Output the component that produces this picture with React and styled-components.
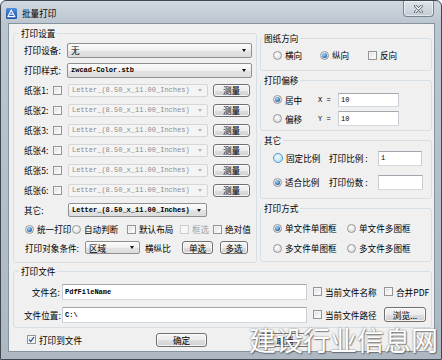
import React from 'react';
import styled, { createGlobalStyle } from 'styled-components';

const CJK = '"Noto Sans CJK SC", "Liberation Sans", sans-serif';
const MONO = '"Liberation Mono", "Noto Sans CJK SC", monospace';

const GlobalStyle = createGlobalStyle`
  html, body { margin: 0; padding: 0; }
  body {
    width: 442px;
    height: 360px;
    overflow: hidden;
    background: #fff;
    font-family: ${CJK};
    color: #000;
  }
  * { box-sizing: border-box; }
`;

const Window = styled.div`
  position: relative;
  width: 442px;
  height: 360px;
  display: flex;
  flex-direction: column;
  border: 1px solid #3f474f;
  border-radius: 6px 6px 0 0;
  background: linear-gradient(180deg, #d0d8e0 0px, #bcc6d0 22px, #adb8c3 100%);
  overflow: hidden;
`;

const TitleBar = styled.div`
  height: 22px;
  flex: none;
  display: flex;
  align-items: center;
  padding: 2px 7px 0 5px;
`;

const Title = styled.span`
  margin-left: 5px;
  font-size: 8.6px;
  line-height: 12px;
`;

const CloseButton = styled.div`
  align-self: flex-start;
  margin: -2px 0 0 auto;
  width: 31px;
  height: 16px;
  display: flex;
  align-items: center;
  justify-content: center;
  border: 1px solid #77838f;
  border-top: none;
  border-radius: 0 0 4px 4px;
  background: linear-gradient(#dfe5eb, #c3ccd5);
  box-shadow: inset 0 0 0 1px rgba(255, 255, 255, 0.55);
`;

const Client = styled.div`
  flex: 1;
  margin: 0 6px 7px 7px;
  display: flex;
  flex-direction: column;
  padding: 3px 2px 0 4px;
  background: #f0f0f0;
  border: 1px solid #8593a0;
`;

const TopSection = styled.div`
  display: flex;
  gap: 3px;
  align-items: flex-start;
`;

const RightColumn = styled.div`
  width: 172px;
  margin-top: 5px;
  display: flex;
  flex-direction: column;
  gap: 3px;
`;

const Group = styled.fieldset`
  margin: ${p => p.$mt || 0}px 0 0 0;
  min-width: 0;
  width: ${p => (p.$w ? `${p.$w}px` : 'auto')};
  border: 1px solid #d5dfe5;
  border-radius: 3px;
  padding: ${p => p.$pad};
`;

const Legend = styled.legend`
  padding: 0 2px;
  margin-left: ${p => p.$indent}px;
  font-size: 8.6px;
  line-height: 12px;
  height: 12px;
`;

const Row = styled.div`
  display: flex;
  align-items: center;
  height: ${p => p.$h}px;
`;

const Label = styled.span`
  flex: none;
  width: ${p => (p.$w ? `${p.$w}px` : 'auto')};
  margin-left: ${p => p.$ml || 0}px;
  text-align: ${p => (p.$right ? 'right' : 'left')};
  font-size: 8.6px;
  line-height: 12px;
  white-space: nowrap;
  color: ${p => (p.$disabled ? '#a3a3a3' : '#000')};
`;

const AxisLabel = styled.span`
  flex: none;
  width: 20px;
  font-family: ${MONO};
  font-size: 7px;
  white-space: nowrap;
`;

const Select = styled.div`
  flex: none;
  display: flex;
  align-items: center;
  width: ${p => p.$w}px;
  height: ${p => p.$h || 14}px;
  margin-left: ${p => p.$ml || 0}px;
  padding: 0 5px 0 3px;
  border: 1px solid ${p => (p.$disabled ? '#d6d6d6' : '#8e8f8f')};
  border-radius: 2px;
  background: ${p =>
    p.$disabled
      ? '#f4f4f4'
      : 'linear-gradient(#fcfcfc, #f0f0f0 50%, #e4e4e4 51%, #dcdcdc)'};
`;

const SelectText = styled.span`
  flex: 1;
  overflow: hidden;
  white-space: nowrap;
  font-family: ${p => (p.$cjk ? CJK : MONO)};
  font-size: ${p => (p.$cjk ? '8.6px' : '7px')};
  font-weight: ${p => (p.$bold ? 700 : 400)};
  color: ${p => (p.$disabled ? '#8c8c8c' : '#000')};
`;

const Arrow = styled.span`
  flex: none;
  width: 0;
  height: 0;
  border-left: 2.5px solid transparent;
  border-right: 2.5px solid transparent;
  border-top: 3px solid ${p => (p.$disabled ? '#b5b5b5' : '#111')};
`;

const Button = styled.div`
  flex: none;
  width: ${p => p.$w}px;
  height: ${p => p.$h || 13}px;
  margin-left: ${p => p.$ml || 0}px;
  display: flex;
  align-items: center;
  justify-content: center;
  border: 1px solid #707070;
  border-radius: 3px;
  background: linear-gradient(#f4f4f4, #ececec 50%, #dedede 51%, #d0d0d0);
  box-shadow: inset 0 0 0 1px rgba(255, 255, 255, 0.75);
  font-size: 8.6px;
  line-height: 12px;
  white-space: nowrap;
`;

const Input = styled.div`
  flex: none;
  width: ${p => p.$w}px;
  height: ${p => p.$h || 15}px;
  margin-left: ${p => p.$ml || 0}px;
  display: flex;
  align-items: center;
  padding: 0 2px;
  border: 1px solid;
  border-color: #a3a7af #c9ced6 #d3d8df #c9ced6;
  background: #fff;
  font-family: ${MONO};
  font-size: 7px;
  font-weight: ${p => (p.$bold ? 700 : 400)};
  white-space: nowrap;
`;

const Option = styled.div`
  flex: none;
  display: flex;
  align-items: center;
  gap: 3px;
  width: ${p => (p.$w ? `${p.$w}px` : 'auto')};
  margin-left: ${p => p.$ml || 0}px;
`;

const Check = styled.span`
  flex: none;
  width: 9px;
  height: 9px;
  display: flex;
  align-items: center;
  justify-content: center;
  border: 1px solid ${p => (p.$disabled ? '#cdcdcd' : '#959595')};
  background: ${p =>
    p.$disabled ? '#f6f6f6' : 'linear-gradient(135deg, #d6d8db, #f9f9f9 70%)'};
  box-shadow: ${p => (p.$disabled ? 'none' : 'inset 0 0 0 1px #f4f4f4')};
`;

const Radio = styled.span`
  flex: none;
  width: ${p => (p.$hover ? 10 : 9)}px;
  height: ${p => (p.$hover ? 10 : 9)}px;
  border-radius: 50%;
  display: flex;
  align-items: center;
  justify-content: center;
  border: 1px solid ${p => (p.$hover ? '#4d97cf' : '#979797')};
  background: ${p =>
    p.$hover
      ? 'radial-gradient(circle at 40% 35%, #f4fbff, #a9d6f3)'
      : 'radial-gradient(circle at 40% 35%, #ffffff, #d2d2d2)'};

  &::after {
    content: '';
    display: ${p => (p.$checked ? 'block' : 'none')};
    width: 5px;
    height: 5px;
    border-radius: 50%;
    background: radial-gradient(circle at 40% 35%, #a6dcff, #1d5ea8 75%);
  }
`;

const ButtonRow = styled.div`
  flex: 1;
  display: flex;
  align-items: center;
  padding-left: 14px;
`;

const Watermark = styled.div`
  position: absolute;
  left: 248px;
  top: 322px;
  font-family: ${CJK};
  font-size: 27px;
  line-height: 34px;
  color: #fff;
  white-space: nowrap;
  text-shadow: 0 0 2px rgba(70, 70, 70, 0.75), 1px 1px 1px rgba(40, 40, 40, 0.45);
  pointer-events: none;
`;

const AppIcon = () => (
  <svg width="11" height="11" viewBox="0 0 11 11">
    <defs>
      <linearGradient id="ico" x1="0" y1="0" x2="0" y2="1">
        <stop offset="0" stopColor="#4d8fe0" />
        <stop offset="1" stopColor="#1a4ea6" />
      </linearGradient>
    </defs>
    <rect x="0" y="0" width="11" height="11" rx="1.5" fill="url(#ico)" />
    <path d="M2 8.6 L5.2 2.2 L8.8 8.6 Z" fill="none" stroke="#fff" strokeWidth="1.1" />
    <path d="M3.6 6.2 L7.4 6.2" stroke="#fff" strokeWidth="1" />
  </svg>
);

const CloseGlyph = () => (
  <svg width="9" height="8" viewBox="0 0 9 8">
    <path d="M1.5 1 L7.5 7 M7.5 1 L1.5 7" stroke="#4a525a" strokeWidth="2.6" strokeLinecap="round" />
    <path d="M1.5 1 L7.5 7 M7.5 1 L1.5 7" stroke="#fff" strokeWidth="1.2" strokeLinecap="round" />
  </svg>
);

const Tick = () => (
  <svg width="7" height="7" viewBox="0 0 7 7">
    <path d="M1 3.6 L2.8 5.4 L6 1.2" fill="none" stroke="#2c5b9e" strokeWidth="1.3" />
  </svg>
);

const PAPER = 'Letter_(8.50_x_11.00_Inches)';

const PaperRow = ({ n }) => (
  <Row $h={20}>
    <Label $w={29}>纸张{n}:</Label>
    <Check />
    <Select $w={140} $h={13} $ml={6} $disabled>
      <SelectText $disabled>{PAPER}</SelectText>
      <Arrow $disabled />
    </Select>
    <Button $w={37} $ml={5}>测量</Button>
  </Row>
);

export default function App() {
  return (
    <>
      <GlobalStyle />
      <Window>
        <TitleBar>
          <AppIcon />
          <Title>批量打印</Title>
          <CloseButton>
            <CloseGlyph />
          </CloseButton>
        </TitleBar>

        <Client>
          <TopSection>
            <Group $w={244} $pad="1px 4px 5px 10px">
              <Legend $indent={-5}>打印设置</Legend>
              <Row $h={20}>
                <Label $w={43}>打印设备:</Label>
                <Select $w={185} $h={15}>
                  <SelectText $cjk>无</SelectText>
                  <Arrow />
                </Select>
              </Row>
              <Row $h={20}>
                <Label $w={43}>打印样式:</Label>
                <Select $w={185} $h={15}>
                  <SelectText $bold>zwcad-Color.stb</SelectText>
                  <Arrow />
                </Select>
              </Row>
              {[1, 2, 3, 4, 5, 6].map(n => (
                <PaperRow key={n} n={n} />
              ))}
              <Row $h={20}>
                <Label $w={44}>其它:</Label>
                <Select $w={139} $h={14}>
                  <SelectText $bold>{PAPER}</SelectText>
                  <Arrow />
                </Select>
              </Row>
              <Row $h={18}>
                <Option $w={47} $ml={1}>
                  <Radio $checked />
                  <Label>统一打印</Label>
                </Option>
                <Option $w={55}>
                  <Radio />
                  <Label>自动判断</Label>
                </Option>
                <Option $w={53}>
                  <Check />
                  <Label>默认布局</Label>
                </Option>
                <Option $w={33}>
                  <Check $disabled />
                  <Label $disabled>框选</Label>
                </Option>
                <Option>
                  <Check />
                  <Label>绝对值</Label>
                </Option>
              </Row>
              <Row $h={19}>
                <Label $w={60} $ml={1}>打印对象条件:</Label>
                <Select $w={55} $h={13}>
                  <SelectText $cjk>区域</SelectText>
                  <Arrow />
                </Select>
                <Label $w={37} $ml={5}>横纵比</Label>
                <Button $w={31}>单选</Button>
                <Button $w={28} $ml={7}>多选</Button>
              </Row>
            </Group>

            <RightColumn>
              <Group $pad="2px 4px 6px 12px">
                <Legend $indent={-11}>图纸方向</Legend>
                <Row $h={18}>
                  <Option $w={47}>
                    <Radio />
                    <Label>横向</Label>
                  </Option>
                  <Option $w={48}>
                    <Radio $checked />
                    <Label>纵向</Label>
                  </Option>
                  <Option>
                    <Check />
                    <Label>反向</Label>
                  </Option>
                </Row>
              </Group>

              <Group $pad="4px 4px 2px 12px">
                <Legend $indent={-11}>打印偏移</Legend>
                <Row $h={19}>
                  <Option $w={45}>
                    <Radio $checked />
                    <Label>居中</Label>
                  </Option>
                  <AxisLabel>X =</AxisLabel>
                  <Input $w={61} $h={14}>10</Input>
                </Row>
                <Row $h={19}>
                  <Option $w={45}>
                    <Radio />
                    <Label>偏移</Label>
                  </Option>
                  <AxisLabel>Y =</AxisLabel>
                  <Input $w={61} $h={15}>10</Input>
                </Row>
              </Group>

              <Group $pad="0 4px 4px 12px">
                <Legend $indent={-11}>其它</Legend>
                <Row $h={24}>
                  <Option $w={56}>
                    <Radio $hover />
                    <Label>固定比例</Label>
                  </Option>
                  <Label $w={49}>打印比例 :</Label>
                  <Input $w={44}>1</Input>
                </Row>
                <Row $h={24}>
                  <Option $w={56}>
                    <Radio $checked />
                    <Label>适合比例</Label>
                  </Option>
                  <Label $w={49}>打印份数 :</Label>
                  <Input $w={45} />
                </Row>
              </Group>

              <Group $pad="4px 4px 3px 12px">
                <Legend $indent={-11}>打印方式</Legend>
                <Row $h={20}>
                  <Option $w={74}>
                    <Radio $checked />
                    <Label>单文件单图框</Label>
                  </Option>
                  <Option>
                    <Radio />
                    <Label>单文件多图框</Label>
                  </Option>
                </Row>
                <Row $h={20}>
                  <Option $w={74}>
                    <Radio />
                    <Label>多文件单图框</Label>
                  </Option>
                  <Option>
                    <Radio />
                    <Label>多文件多图框</Label>
                  </Option>
                </Row>
              </Group>
            </RightColumn>
          </TopSection>

          <Group $mt={2} $pad="3px 4px 1px 10px">
            <Legend $indent={-5}>打印文件</Legend>
            <Row $h={23}>
              <Label $w={36} $right>文件名:</Label>
              <Input $w={245} $h={16} $ml={2} $bold>PdfFileName</Input>
              <Option $w={71} $ml={6}>
                <Check />
                <Label>当前文件名称</Label>
              </Option>
              <Option>
                <Check />
                <Label>合并PDF</Label>
              </Option>
            </Row>
            <Row $h={23}>
              <Label $w={36} $right>文件位置:</Label>
              <Input $w={245} $h={16} $ml={2} $bold>C:\</Input>
              <Option $w={71} $ml={6}>
                <Check />
                <Label>当前文件路径</Label>
              </Option>
              <Button $w={42} $h={15}>浏览...</Button>
            </Row>
          </Group>

          <ButtonRow>
            <Option $w={129}>
              <Check>
                <Tick />
              </Check>
              <Label>打印到文件</Label>
            </Option>
            <Button $w={51} $h={14}>确定</Button>
            <Button $w={50} $h={14} $ml={53}>取消</Button>
          </ButtonRow>
        </Client>

        <Watermark>建设行业信息网</Watermark>
      </Window>
    </>
  );
}
